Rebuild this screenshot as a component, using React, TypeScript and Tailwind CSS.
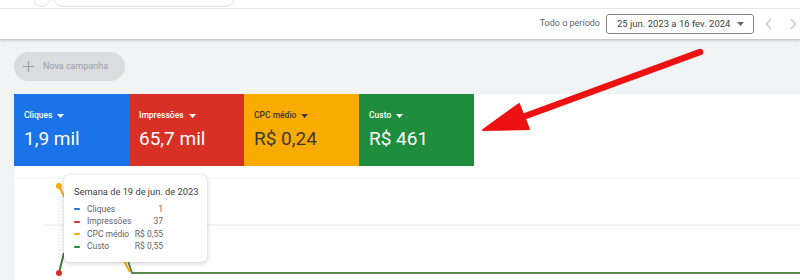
import React from "react";

type Metric = { label: string; value: string; bg: string; text: string };

const metrics: Metric[] = [
  { label: "Cliques", value: "1,9 mil", bg: "bg-[#1a73e8]", text: "text-white" },
  { label: "Impressões", value: "65,7 mil", bg: "bg-[#d93025]", text: "text-white" },
  { label: "CPC médio", value: "R$ 0,24", bg: "bg-[#f9ab00]", text: "text-[#3c3a36]" },
  { label: "Custo", value: "R$ 461", bg: "bg-[#1e8e3e]", text: "text-white" },
];

const rows = [
  { label: "Cliques", value: "1", color: "bg-[#1a73e8]" },
  { label: "Impressões", value: "37", color: "bg-[#d93025]" },
  { label: "CPC médio", value: "R$ 0,55", color: "bg-[#f9ab00]" },
  { label: "Custo", value: "R$ 0,55", color: "bg-[#1e8e3e]" },
];

function Caret({ className }: { className?: string }) {
  return (
    <svg width="7" height="4" viewBox="0 0 7 4" className={className}>
      <path d="M0 0h7L3.5 4z" fill="currentColor" />
    </svg>
  );
}

function MetricCard({ m }: { m: Metric }) {
  return (
    <div className={`flex h-[72px] w-[115px] flex-col px-[10px] pt-[16px] ${m.bg} ${m.text}`}>
      <div className="flex items-center gap-[5px] whitespace-nowrap text-[8.5px] font-medium leading-[11px]">
        {m.label}
        <Caret />
      </div>
      <div className="mt-[6px] whitespace-nowrap text-[19px] leading-[24px]">{m.value}</div>
    </div>
  );
}

function Tooltip() {
  return (
    <div className="absolute left-[50px] top-[9px] h-[87px] w-[143px] rounded-[6px] bg-white px-[10px] pt-[10px] shadow-[0_1px_5px_rgba(60,64,67,0.3)]">
      <div className="whitespace-nowrap text-[9.3px] leading-[13px] text-[#3c4043]">Semana de 19 de jun. de 2023</div>
      <div className="mt-[5px] flex w-[89px] flex-col">
        {rows.map((r) => (
          <div key={r.label} className="flex h-[12.5px] items-center whitespace-nowrap text-[8.5px] text-[#5f6368]">
            <span className={`mr-[7px] h-[2px] w-[6px] rounded-full ${r.color}`} />
            <span className="flex-1">{r.label}</span>
            <span>{r.value}</span>
          </div>
        ))}
      </div>
    </div>
  );
}

function Chart() {
  return (
    <div className="relative h-[114px]">
      <svg width="786" height="114" className="block">
        <line x1="0" y1="12" x2="786" y2="12" stroke="#f1f3f4" strokeWidth="1" />
        <line x1="30" y1="59" x2="786" y2="59" stroke="#e8eaed" strokeWidth="1" />
        <line x1="45" y1="12" x2="45" y2="107" stroke="#dadce0" strokeWidth="1" strokeDasharray="1 2" />
        <polyline points="45,20 52,34" fill="none" stroke="#f9ab00" strokeWidth="2" />
        <polyline points="45,107 50,87" fill="none" stroke="#3d7a3a" strokeWidth="2" />
        <polyline points="110,95 116,106" fill="none" stroke="#f9ab00" strokeWidth="2" />
        <polyline points="112,89 118,107 786,107" fill="none" stroke="#5a8a4c" strokeWidth="2" />
        <circle cx="45" cy="20" r="3" fill="#f9ab00" />
        <circle cx="45" cy="107" r="3" fill="#d93025" />
      </svg>
      <Tooltip />
    </div>
  );
}

export default function App() {
  return (
    <div className="relative h-[280px] w-[800px] overflow-hidden bg-[#f1f3f4] font-['Roboto',sans-serif]">
      <div className="flex h-[9px] items-end gap-[3px] overflow-hidden border-b border-[#e8eaed] bg-white pl-[33px]">
        <div className="mb-[1px] h-[20px] w-[17px] shrink-0 rounded-full border border-[#e0e0e0]" />
        <div className="mb-[1px] h-[20px] w-[182px] shrink-0 rounded-full border border-[#e0e0e0]" />
      </div>
      <div className="flex h-[31px] items-center justify-end border-b border-[#c8cacd] bg-white pr-[2px] shadow-[0_1px_2px_rgba(60,64,67,0.2)]">
        <span className="mr-[6px] whitespace-nowrap text-[9px] text-[#5f6368]">Todo o período</span>
        <div className="flex h-[20px] w-[148px] items-center justify-between whitespace-nowrap rounded-[3px] border border-[#80868b] pl-[10px] pr-[9px] text-[9.5px] text-[#3c4043]">
          25 jun. 2023 a 16 fev. 2024
          <Caret className="text-[#5f6368]" />
        </div>
        <svg width="10" height="14" viewBox="0 0 10 14" className="ml-[10px]">
          <path d="M7 2L2.5 7 7 12" fill="none" stroke="#c4c7ca" strokeWidth="1.3" />
        </svg>
        <svg width="10" height="14" viewBox="0 0 10 14" className="ml-[14px]">
          <path d="M3 2l4.5 5L3 12" fill="none" stroke="#c4c7ca" strokeWidth="1.3" />
        </svg>
      </div>
      <div className="pl-[14px] pt-[12px]">
        <div className="flex h-[29px] w-[111px] items-center gap-[9px] rounded-full bg-[#dadce0] pl-[9px] text-[9px] text-[#9aa0a6]">
          <svg width="11" height="11" viewBox="0 0 11 11">
            <path d="M5.5 0v11M0 5.5h11" stroke="#9aa0a6" strokeWidth="1.2" />
          </svg>
          Nova campanha
        </div>
        <div className="mt-[13px] bg-white">
          <div className="flex">
            {metrics.map((m) => (
              <MetricCard key={m.label} m={m} />
            ))}
          </div>
          <Chart />
        </div>
      </div>
      <svg width="800" height="280" className="pointer-events-none absolute left-0 top-0">
        <line x1="700" y1="52" x2="520" y2="118" stroke="#ee1111" strokeWidth="6.5" strokeLinecap="round" />
        <polygon points="483,130 519,104 529,129" fill="#ee1111" stroke="#ee1111" strokeWidth="2" strokeLinejoin="round" />
      </svg>
    </div>
  );
}
